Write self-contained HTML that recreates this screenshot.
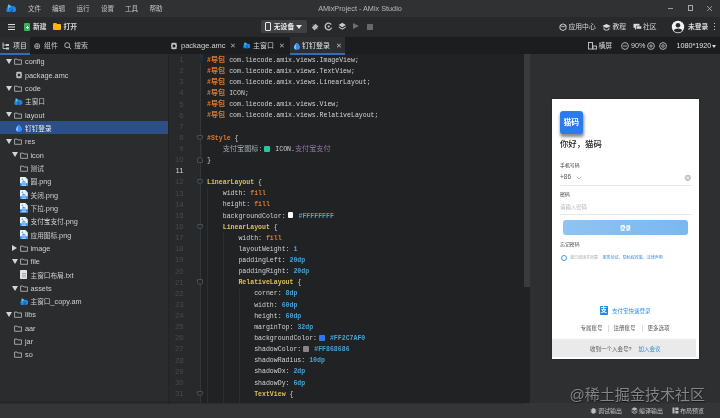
<!DOCTYPE html>
<html lang="zh"><head><meta charset="utf-8"><title>AMixProject - AMix Studio</title>
<style>
*{margin:0;padding:0;box-sizing:border-box}
html,body{width:720px;height:418px;overflow:hidden;background:#212223}
body{position:relative;font-family:"Liberation Sans","Noto Sans CJK SC",sans-serif;color:#c8c8c8;font-size:7px;line-height:1}
#wrap{position:absolute;left:0;top:0;width:720px;height:418px;filter:blur(0.4px)}
.a{position:absolute;white-space:nowrap}
.t{position:absolute;white-space:nowrap;line-height:10px;height:10px}
#title{left:-6px;top:-6px;width:732px;height:22.5px;background:#303132}
#tool{left:-6px;top:16.5px;width:732px;height:20.5px;background:#28292a}
#tabs{left:-6px;top:37px;width:732px;height:17px;background:#1c1d1e}
#side{left:-6px;top:53.6px;width:174px;height:350px;background:#2b2c2d}
#edit{left:168px;top:53.6px;width:362.3px;height:350px;background:linear-gradient(90deg,#28292a 32.5px,#212223 32.5px)}
#split{left:524px;top:53.6px;width:6.1px;height:233.4px;background:#393b3c}
#prev{left:530.3px;top:53.6px;width:196px;height:350px;background:#2d2f30}
#status{left:-6px;top:403.3px;width:732px;height:20.7px;background:#333536}
.menu{font-size:6.6px;color:#c4c4c4;top:4.3px}
.tb{font-size:6.8px;color:#d8d8d8;font-weight:bold;top:22px}
.row{position:absolute;left:0;width:168px;height:13.3px}
.row .t{top:2.5px;font-size:7.1px;color:#d0d0d0}
.ln{position:absolute;left:163.5px;width:20px;margin-top:-0.7px;text-align:right;font-family:"Liberation Sans",sans-serif;font-size:7.7px;color:#5a5c5e;line-height:11.13px;height:11.13px}
.cl{position:absolute;left:207px;font-family:"Liberation Mono","Noto Sans CJK SC",monospace;font-size:6.56px;font-weight:normal;color:#d0d4d8;line-height:11.13px;height:11.13px;white-space:pre}
.k{color:#dd7a30;font-weight:bold}.c{color:#d8c452;font-weight:bold}.n{color:#45a4d8;font-weight:bold}.p{color:#bcc2c8}.g{color:#a4abb2}
.sw{display:inline-block;width:5.7px;height:5.9px;vertical-align:-0.8px;margin:0 1.2px 0 2.1px;border-radius:1px}
.z{font-size:7.15px;font-weight:normal}
.zb{font-size:7.15px}
.zh{font-size:6.65px}
.row .t{font-size:7.3px}
.guide{position:absolute;width:1px;background:#2c2e30}
</style></head>
<body>
<div id="wrap">
<div class="a" id="title"></div><div class="a" id="tool"></div><div class="a" id="tabs"></div>
<div class="a" id="side"></div><div class="a" id="edit"></div><div class="a" id="split"></div><div class="a" id="prev"></div><div class="a" id="status"></div>
<div class="a" style="left:168px;top:53.6px;width:1px;height:350px;background:#222324"></div>
<div class="a" style="left:0;top:400.6px;width:524px;height:3px;background:rgba(30,36,38,.45)"></div>
<svg class="a" style="left:5.6px;top:3.6px" width="10.6" height="8.6" viewBox="0 0 11 9"><path d="M2.4 0.3L5.6 2.4C8.2 1.6 10.8 3.3 10.6 6.1C10.5 8 8.8 8.8 6.8 8.8H2.2C0.6 8.8 0.1 7.2 0.5 5.6C0.9 4 1.8 2.4 2.4 0.3Z" fill="#1c86e2"/><path d="M2.4 0.3L5.6 2.4C4 3 3 4.4 2.8 6.4C2 5 1.9 2.6 2.4 0.3Z" fill="#52c4f6"/><path d="M4.6 8.8C4.4 6.4 5.6 4.8 7.4 4.6C6.6 5.6 6.4 7.2 6.8 8.8Z" fill="#0f5fb4"/><circle cx="3.9" cy="4.6" r="0.55" fill="#0b3f80"/></svg>
<div class="t menu" style="left:28px">文件</div>
<div class="t menu" style="left:52px">编辑</div>
<div class="t menu" style="left:76.5px">运行</div>
<div class="t menu" style="left:101px">设置</div>
<div class="t menu" style="left:125px">工具</div>
<div class="t menu" style="left:149.5px">帮助</div>
<div class="t" style="left:0;width:720px;text-align:center;top:4px;font-size:7.27px;color:#b8b8b8">AMixProject - AMix Studio</div>
<div class="a" style="left:667.5px;top:8px;width:5px;height:1px;background:#9a9a9a"></div>
<div class="a" style="left:687.5px;top:5.3px;width:5.4px;height:5.4px;border:0.9px solid #a8a8a8"></div>
<svg class="a" style="left:706.8px;top:5.5px" width="5.2" height="5.2" viewBox="0 0 6 6"><path d="M0 0L6 6M6 0L0 6" stroke="#b0b0b0" stroke-width="1"/></svg>
<div class="a" style="left:8px;top:24px;width:7px;height:1px;background:#ddd;box-shadow:0 2.5px 0 #ddd,0 5px 0 #ddd"></div>
<div class="a" style="left:24px;top:23px;width:6px;height:8px;background:#35b45a;border-radius:1px"></div>
<div class="a" style="left:26px;top:26.5px;width:3px;height:1px;background:#fff"></div><div class="a" style="left:27px;top:25.5px;width:1px;height:3px;background:#fff"></div>
<div class="t tb" style="left:33px">新建</div>
<div class="a" style="left:53.3px;top:24.3px;width:8.2px;height:6px;background:#f7b51c;border-radius:1px"></div><div class="a" style="left:53.3px;top:23.4px;width:4px;height:2px;background:#f7b51c;border-radius:1px"></div>
<div class="t tb" style="left:63.5px">打开</div>
<div class="a" style="left:261.3px;top:20.2px;width:45.5px;height:12.8px;background:#3e4143;border-radius:2px"></div>
<div class="a" style="left:264.8px;top:21.8px;width:6.2px;height:9.2px;border:1px solid #e8e8e8;border-radius:1px;border-top-width:1.5px;border-bottom-width:1.5px"></div>
<div class="t tb" style="left:273.8px;top:21.5px;color:#eee">无设备</div>
<div class="a" style="left:296px;top:24.8px;border:3.5px solid transparent;border-top:4.7px solid #e8e8e8;border-bottom:0"></div>
<svg class="a" style="left:310.5px;top:22.5px" width="8" height="8" viewBox="0 0 8 8"><path d="M4.6 0.8L7.4 3.6L3.6 7.4L0.8 4.6Z" fill="#b8b8b8"/><path d="M2 1.6L3 2.6M5.6 5.2L6.6 6.2" stroke="#b8b8b8" stroke-width="0.9"/></svg>
<svg class="a" style="left:323.7px;top:22px" width="9" height="9" viewBox="0 0 9 9"><path d="M7.2 2.6A3.3 3.3 0 1 0 7.6 5.6" fill="none" stroke="#c4c4c4" stroke-width="1.3"/><circle cx="4.7" cy="4.5" r="1.1" fill="#c4c4c4"/></svg>
<svg class="a" style="left:338px;top:22.3px" width="8.5" height="8.5" viewBox="0 0 9 9"><path d="M4.5 0.8L8.3 3.2L4.5 5.6L0.7 3.2Z" fill="#cacaca"/><path d="M0.8 5.2L4.5 7.6L8.2 5.2" fill="none" stroke="#cacaca" stroke-width="1.1"/></svg>
<div class="a" style="left:352.7px;top:22.8px;border:3.7px solid transparent;border-left:6.6px solid #6c6e70;border-right:0"></div>
<div class="a" style="left:367px;top:23.8px;width:6px;height:5.8px;background:#66686a;border-radius:0.5px"></div>
<svg class="a" style="left:559px;top:22.5px" width="8" height="8" viewBox="0 0 8 8"><path d="M1 2.4L4 0.9L7 2.4V6L4 7.5L1 6Z" fill="none" stroke="#ddd" stroke-width="0.9" stroke-linejoin="round"/><path d="M1 2.4L4 3.9L7 2.4" fill="none" stroke="#ddd" stroke-width="0.8"/></svg>
<div class="t tb" style="left:568.5px;font-weight:normal">应用中心</div>
<svg class="a" style="left:602px;top:22.5px" width="9" height="8" viewBox="0 0 9 8"><path d="M0.3 3L4.5 1L8.7 3L4.5 5Z" fill="#ddd"/><path d="M2 4.5V6.3C3 7.4 6 7.4 7 6.3V4.5" fill="none" stroke="#ddd" stroke-width="0.9"/></svg>
<div class="t tb" style="left:612.5px;font-weight:normal">教程</div>
<svg class="a" style="left:633px;top:22.5px" width="9" height="8" viewBox="0 0 9 8"><rect x="0.5" y="0.8" width="6" height="4" fill="#ddd"/><path d="M2 4.5L2 7L4.5 4.8Z" fill="#ddd"/><rect x="3.5" y="3" width="5" height="3" fill="#ddd" stroke="#27292a" stroke-width="0.5"/></svg>
<div class="t tb" style="left:643px;font-weight:normal">社区</div>
<svg class="a" style="left:671px;top:19.6px" width="14" height="14" viewBox="0 0 14 14"><circle cx="7" cy="7" r="6.2" fill="#f2f2f2"/><circle cx="7" cy="5.3" r="2.3" fill="#27292a"/><path d="M2.8 10.8C3.5 7.6 10.5 7.6 11.2 10.8C9 13 5 13 2.8 10.8Z" fill="#27292a"/></svg>
<div class="t tb" style="left:688px">未登录</div>
<div class="a" style="left:713.5px;top:23px;width:1.4px;height:1.4px;background:#ccc;box-shadow:0 3px 0 #ccc,0 6px 0 #ccc"></div>
<div class="a" style="left:-6px;top:37px;width:36px;height:17.6px;background:#2b2d2e;border-bottom:2.4px solid #356cb2"></div>
<svg class="a" style="left:2px;top:41.5px" width="8" height="8" viewBox="0 0 8 8"><path d="M1 0.5V6.5H4M1 3H4" fill="none" stroke="#ccc" stroke-width="0.9"/><rect x="4" y="2" width="3" height="2" fill="#ccc"/><rect x="4" y="5.5" width="3" height="2" fill="#ccc"/></svg>
<div class="t" style="left:13px;top:41px;font-size:6.9px;color:#ddd">项目</div>
<svg class="a" style="left:33.5px;top:42.5px" width="6.4" height="6.4" viewBox="0 0 7 7"><circle cx="3.5" cy="3.5" r="2.8" fill="none" stroke="#bbb" stroke-width="0.9"/><path d="M3.5 1V6M1 3.5H6" stroke="#bbb" stroke-width="0.8"/></svg>
<div class="t" style="left:44px;top:41px;font-size:6.9px;color:#c4c4c4">组件</div>
<svg class="a" style="left:63.5px;top:42px" width="8" height="8" viewBox="0 0 8 8"><circle cx="3.2" cy="3.2" r="2.5" fill="none" stroke="#bbb" stroke-width="0.9"/><path d="M5 5L7.2 7.2" stroke="#bbb" stroke-width="0.9"/></svg>
<div class="t" style="left:74px;top:41px;font-size:6.9px;color:#c4c4c4">搜索</div>
<div class="a" style="left:289.7px;top:37px;width:55.6px;height:17.6px;background:#2c2e2f;border-bottom:2.4px solid #356cb2"></div>
<svg class="a" style="left:170.3px;top:41.5px" width="8" height="8" viewBox="0 0 8 8"><path d="M4 0.6L5 1L5.9 0.7L6.8 1.6L6.5 2.5L7 3.4V4.6L6.5 5.5L6.8 6.4L5.9 7.3L5 7L4 7.4L3 7L2.1 7.3L1.2 6.4L1.5 5.5L1 4.6V3.4L1.5 2.5L1.2 1.6L2.1 0.7L3 1Z" fill="#c0c0c0"/><circle cx="4" cy="4" r="1.5" fill="#1b1c1d"/></svg>
<div class="t" style="left:181px;top:40.5px;font-size:7.5px;color:#d0d0d0">package.amc</div>
<div class="t" style="left:230px;top:40.5px;font-size:7px;color:#aaa">✕</div>
<svg class="a" style="left:242.6px;top:42px" width="7.8" height="6.6" viewBox="0 0 11 9"><path d="M2.4 0.3L5.6 2.4C8.2 1.6 10.8 3.3 10.6 6.1C10.5 8 8.8 8.8 6.8 8.8H2.2C0.6 8.8 0.1 7.2 0.5 5.6C0.9 4 1.8 2.4 2.4 0.3Z" fill="#1c86e2"/><path d="M2.4 0.3L5.6 2.4C4 3 3 4.4 2.8 6.4C2 5 1.9 2.6 2.4 0.3Z" fill="#52c4f6"/><path d="M4.6 8.8C4.4 6.4 5.6 4.8 7.4 4.6C6.6 5.6 6.4 7.2 6.8 8.8Z" fill="#0f5fb4"/><circle cx="3.9" cy="4.6" r="0.55" fill="#0b3f80"/></svg>
<div class="t" style="left:253px;top:40.5px;font-size:7px;color:#d0d0d0">主窗口</div>
<div class="t" style="left:279px;top:40.5px;font-size:7px;color:#aaa">✕</div>
<svg class="a" style="left:292.5px;top:41.5px" width="8" height="8" viewBox="0 0 8 8"><path d="M4 0.5C6 2.5 7 3.8 7 5.2C7 6.8 5.7 7.8 4 7.8C2.3 7.8 1 6.8 1 5.2C1 3.8 2 2.5 4 0.5Z" fill="#3590f2"/><path d="M3.6 1C2.2 2.6 1.3 3.9 1.3 5.2C1.3 6.3 1.9 7.1 2.8 7.4C2.2 5.4 2.6 3 3.6 1Z" fill="#b4d9ff"/></svg>
<div class="t" style="left:302px;top:40.5px;font-size:7px;color:#e6e6e6">钉钉登录</div>
<div class="t" style="left:335.5px;top:40.5px;font-size:7px;color:#bbb">✕</div>
<svg class="a" style="left:588px;top:42px" width="9" height="8" viewBox="0 0 9 8"><rect x="0.5" y="0.5" width="4" height="6.5" fill="none" stroke="#ccc" stroke-width="0.9"/><rect x="5" y="4" width="3.5" height="3" fill="none" stroke="#ccc" stroke-width="0.9"/></svg>
<div class="t" style="left:598.5px;top:40.5px;font-size:6.8px;color:#d0d0d0">横屏</div>
<svg class="a" style="left:621px;top:42px" width="8" height="8" viewBox="0 0 8 8"><circle cx="4" cy="4" r="3.4" fill="none" stroke="#d4d4d4" stroke-width="0.8"/><path d="M2.1 4H5.9" stroke="#d4d4d4" stroke-width="0.8"/></svg>
<div class="t" style="left:631px;top:40.5px;font-size:7.2px;color:#d8d8d8">90%</div>
<svg class="a" style="left:646.8px;top:42px" width="8" height="8" viewBox="0 0 8 8"><circle cx="4" cy="4" r="3.4" fill="none" stroke="#d4d4d4" stroke-width="0.8"/><path d="M2.1 4H5.9M4 2.1V5.9" stroke="#d4d4d4" stroke-width="0.7"/></svg>
<svg class="a" style="left:659.2px;top:42px" width="8" height="8" viewBox="0 0 8 8"><circle cx="4" cy="4" r="3.4" fill="none" stroke="#d4d4d4" stroke-width="0.8"/><circle cx="4" cy="4" r="1.3" fill="none" stroke="#d4d4d4" stroke-width="0.7"/></svg>
<div class="t" style="left:676.5px;top:40.5px;font-size:7.2px;color:#e0e0e0">1080*1920</div>
<div class="a" style="left:711.5px;top:44.5px;border:2.5px solid transparent;border-top:3.5px solid #ddd;border-bottom:0"></div>
<div class="row" style="top:54.90px;"><div class="a" style="left:5.5px;top:4.3px;border:3px solid transparent;border-top:5.2px solid #d4d4d4;border-bottom:0"></div><svg class="a" style="left:14px;top:3.4px" width="8.2" height="7.2" viewBox="0 0 9 8"><path d="M0.6 1.2H3.4L4.3 2.2H8.4V7H0.6Z" fill="none" stroke="#bdbdbd" stroke-width="0.9" stroke-linejoin="round"/></svg><div class="t" style="left:25px;color:#d0d0d0">config</div></div>
<div class="row" style="top:68.22px;"><svg class="a" style="left:15px;top:2.8px" width="8" height="8" viewBox="0 0 8 8"><path d="M4 0.6L5 1L5.9 0.7L6.8 1.6L6.5 2.5L7 3.4V4.6L6.5 5.5L6.8 6.4L5.9 7.3L5 7L4 7.4L3 7L2.1 7.3L1.2 6.4L1.5 5.5L1 4.6V3.4L1.5 2.5L1.2 1.6L2.1 0.7L3 1Z" fill="#c0c0c0"/><circle cx="4" cy="4" r="1.5" fill="#2b2d2e"/></svg><div class="t" style="left:25px;color:#d0d0d0">package.amc</div></div>
<div class="row" style="top:81.54px;"><div class="a" style="left:5.5px;top:4.3px;border:3px solid transparent;border-top:5.2px solid #d4d4d4;border-bottom:0"></div><svg class="a" style="left:14px;top:3.4px" width="8.2" height="7.2" viewBox="0 0 9 8"><path d="M0.6 1.2H3.4L4.3 2.2H8.4V7H0.6Z" fill="none" stroke="#bdbdbd" stroke-width="0.9" stroke-linejoin="round"/></svg><div class="t" style="left:25px;color:#d0d0d0">code</div></div>
<div class="row" style="top:94.86px;"><svg class="a" style="left:14px;top:2.9px" width="8.8" height="7.2" viewBox="0 0 11 9"><path d="M2.4 0.3L5.6 2.4C8.2 1.6 10.8 3.3 10.6 6.1C10.5 8 8.8 8.8 6.8 8.8H2.2C0.6 8.8 0.1 7.2 0.5 5.6C0.9 4 1.8 2.4 2.4 0.3Z" fill="#1c86e2"/><path d="M2.4 0.3L5.6 2.4C4 3 3 4.4 2.8 6.4C2 5 1.9 2.6 2.4 0.3Z" fill="#52c4f6"/><path d="M4.6 8.8C4.4 6.4 5.6 4.8 7.4 4.6C6.6 5.6 6.4 7.2 6.8 8.8Z" fill="#0f5fb4"/><circle cx="3.9" cy="4.6" r="0.55" fill="#0b3f80"/></svg><div class="t" style="left:25px;color:#d0d0d0"><span class="zh">主窗口</span></div></div>
<div class="row" style="top:108.18px;"><div class="a" style="left:5.5px;top:4.3px;border:3px solid transparent;border-top:5.2px solid #d4d4d4;border-bottom:0"></div><svg class="a" style="left:14px;top:3.4px" width="8.2" height="7.2" viewBox="0 0 9 8"><path d="M0.6 1.2H3.4L4.3 2.2H8.4V7H0.6Z" fill="none" stroke="#bdbdbd" stroke-width="0.9" stroke-linejoin="round"/></svg><div class="t" style="left:25px;color:#d0d0d0">layout</div></div>
<div class="a" style="left:-6px;top:121.30px;width:174px;height:12.9px;background:#2c4f85"></div>
<div class="row" style="top:121.50px;"><svg class="a" style="left:15px;top:2.6px" width="8" height="8" viewBox="0 0 8 8"><path d="M4 0.5C6 2.5 7 3.8 7 5.2C7 6.8 5.7 7.8 4 7.8C2.3 7.8 1 6.8 1 5.2C1 3.8 2 2.5 4 0.5Z" fill="#3590f2"/><path d="M3.6 1C2.2 2.6 1.3 3.9 1.3 5.2C1.3 6.3 1.9 7.1 2.8 7.4C2.2 5.4 2.6 3 3.6 1Z" fill="#b4d9ff"/></svg><div class="t" style="left:25px;color:#f0f0f0"><span class="zh">钉钉登录</span></div></div>
<div class="row" style="top:134.82px;"><div class="a" style="left:5.5px;top:4.3px;border:3px solid transparent;border-top:5.2px solid #d4d4d4;border-bottom:0"></div><svg class="a" style="left:14px;top:3.4px" width="8.2" height="7.2" viewBox="0 0 9 8"><path d="M0.6 1.2H3.4L4.3 2.2H8.4V7H0.6Z" fill="none" stroke="#bdbdbd" stroke-width="0.9" stroke-linejoin="round"/></svg><div class="t" style="left:25px;color:#d0d0d0">res</div></div>
<div class="row" style="top:148.14px;"><div class="a" style="left:11.5px;top:4.3px;border:3px solid transparent;border-top:5.2px solid #d4d4d4;border-bottom:0"></div><svg class="a" style="left:20px;top:3.4px" width="8.2" height="7.2" viewBox="0 0 9 8"><path d="M0.6 1.2H3.4L4.3 2.2H8.4V7H0.6Z" fill="none" stroke="#bdbdbd" stroke-width="0.9" stroke-linejoin="round"/></svg><div class="t" style="left:30.5px;color:#d0d0d0">icon</div></div>
<div class="row" style="top:161.46px;"><svg class="a" style="left:20px;top:3.4px" width="8.2" height="7.2" viewBox="0 0 9 8"><path d="M0.6 1.2H3.4L4.3 2.2H8.4V7H0.6Z" fill="none" stroke="#bdbdbd" stroke-width="0.9" stroke-linejoin="round"/></svg><div class="t" style="left:30.5px;color:#d0d0d0"><span class="zh">测试</span></div></div>
<div class="row" style="top:174.78px;"><svg class="a" style="left:19.9px;top:1.8px" width="7.8" height="9.6" viewBox="0 0 7.8 9.6"><path d="M0.6 0H5.4L7.8 2.4V9A0.6 0.6 0 0 1 7.2 9.6H0.6A0.6 0.6 0 0 1 0 9V0.6A0.6 0.6 0 0 1 0.6 0Z" fill="#eef5fd"/><path d="M0 6.2H7.8V9A0.6 0.6 0 0 1 7.2 9.6H0.6A0.6 0.6 0 0 1 0 9Z" fill="#2b86e6"/><path d="M5.4 0L7.8 2.4H5.4Z" fill="#b9d6f5"/><path d="M1.8 5.6L3.2 3.2L4.2 4.6L4.9 3.9L6 5.6Z" fill="#3b93ee"/><circle cx="2.4" cy="2.2" r="0.8" fill="#3b93ee"/><path d="M1.6 7.2H6.2M1.6 8.5H6.2" stroke="#cfe4fa" stroke-width="0.7"/></svg><div class="t" style="left:30.5px;color:#d0d0d0"><span class="zh">圆</span>.png</div></div>
<div class="row" style="top:188.10px;"><svg class="a" style="left:19.9px;top:1.8px" width="7.8" height="9.6" viewBox="0 0 7.8 9.6"><path d="M0.6 0H5.4L7.8 2.4V9A0.6 0.6 0 0 1 7.2 9.6H0.6A0.6 0.6 0 0 1 0 9V0.6A0.6 0.6 0 0 1 0.6 0Z" fill="#eef5fd"/><path d="M0 6.2H7.8V9A0.6 0.6 0 0 1 7.2 9.6H0.6A0.6 0.6 0 0 1 0 9Z" fill="#2b86e6"/><path d="M5.4 0L7.8 2.4H5.4Z" fill="#b9d6f5"/><path d="M1.8 5.6L3.2 3.2L4.2 4.6L4.9 3.9L6 5.6Z" fill="#3b93ee"/><circle cx="2.4" cy="2.2" r="0.8" fill="#3b93ee"/><path d="M1.6 7.2H6.2M1.6 8.5H6.2" stroke="#cfe4fa" stroke-width="0.7"/></svg><div class="t" style="left:30.5px;color:#d0d0d0"><span class="zh">关闭</span>.png</div></div>
<div class="row" style="top:201.42px;"><svg class="a" style="left:19.9px;top:1.8px" width="7.8" height="9.6" viewBox="0 0 7.8 9.6"><path d="M0.6 0H5.4L7.8 2.4V9A0.6 0.6 0 0 1 7.2 9.6H0.6A0.6 0.6 0 0 1 0 9V0.6A0.6 0.6 0 0 1 0.6 0Z" fill="#eef5fd"/><path d="M0 6.2H7.8V9A0.6 0.6 0 0 1 7.2 9.6H0.6A0.6 0.6 0 0 1 0 9Z" fill="#2b86e6"/><path d="M5.4 0L7.8 2.4H5.4Z" fill="#b9d6f5"/><path d="M1.8 5.6L3.2 3.2L4.2 4.6L4.9 3.9L6 5.6Z" fill="#3b93ee"/><circle cx="2.4" cy="2.2" r="0.8" fill="#3b93ee"/><path d="M1.6 7.2H6.2M1.6 8.5H6.2" stroke="#cfe4fa" stroke-width="0.7"/></svg><div class="t" style="left:30.5px;color:#d0d0d0"><span class="zh">下拉</span>.png</div></div>
<div class="row" style="top:214.74px;"><svg class="a" style="left:19.9px;top:1.8px" width="7.8" height="9.6" viewBox="0 0 7.8 9.6"><path d="M0.6 0H5.4L7.8 2.4V9A0.6 0.6 0 0 1 7.2 9.6H0.6A0.6 0.6 0 0 1 0 9V0.6A0.6 0.6 0 0 1 0.6 0Z" fill="#eef5fd"/><path d="M0 6.2H7.8V9A0.6 0.6 0 0 1 7.2 9.6H0.6A0.6 0.6 0 0 1 0 9Z" fill="#2b86e6"/><path d="M5.4 0L7.8 2.4H5.4Z" fill="#b9d6f5"/><path d="M1.8 5.6L3.2 3.2L4.2 4.6L4.9 3.9L6 5.6Z" fill="#3b93ee"/><circle cx="2.4" cy="2.2" r="0.8" fill="#3b93ee"/><path d="M1.6 7.2H6.2M1.6 8.5H6.2" stroke="#cfe4fa" stroke-width="0.7"/></svg><div class="t" style="left:30.5px;color:#d0d0d0"><span class="zh">支付宝支付</span>.png</div></div>
<div class="row" style="top:228.06px;"><svg class="a" style="left:19.9px;top:1.8px" width="7.8" height="9.6" viewBox="0 0 7.8 9.6"><path d="M0.6 0H5.4L7.8 2.4V9A0.6 0.6 0 0 1 7.2 9.6H0.6A0.6 0.6 0 0 1 0 9V0.6A0.6 0.6 0 0 1 0.6 0Z" fill="#eef5fd"/><path d="M0 6.2H7.8V9A0.6 0.6 0 0 1 7.2 9.6H0.6A0.6 0.6 0 0 1 0 9Z" fill="#2b86e6"/><path d="M5.4 0L7.8 2.4H5.4Z" fill="#b9d6f5"/><path d="M1.8 5.6L3.2 3.2L4.2 4.6L4.9 3.9L6 5.6Z" fill="#3b93ee"/><circle cx="2.4" cy="2.2" r="0.8" fill="#3b93ee"/><path d="M1.6 7.2H6.2M1.6 8.5H6.2" stroke="#cfe4fa" stroke-width="0.7"/></svg><div class="t" style="left:30.5px;color:#d0d0d0"><span class="zh">应用图标</span>.png</div></div>
<div class="row" style="top:241.38px;"><div class="a" style="left:12.0px;top:3.7px;border:3px solid transparent;border-left:5.2px solid #d4d4d4;border-right:0"></div><svg class="a" style="left:20px;top:3.4px" width="8.2" height="7.2" viewBox="0 0 9 8"><path d="M0.6 1.2H3.4L4.3 2.2H8.4V7H0.6Z" fill="none" stroke="#bdbdbd" stroke-width="0.9" stroke-linejoin="round"/></svg><div class="t" style="left:30.5px;color:#d0d0d0">image</div></div>
<div class="row" style="top:254.70px;"><div class="a" style="left:11.5px;top:4.3px;border:3px solid transparent;border-top:5.2px solid #d4d4d4;border-bottom:0"></div><svg class="a" style="left:20px;top:3.4px" width="8.2" height="7.2" viewBox="0 0 9 8"><path d="M0.6 1.2H3.4L4.3 2.2H8.4V7H0.6Z" fill="none" stroke="#bdbdbd" stroke-width="0.9" stroke-linejoin="round"/></svg><div class="t" style="left:30.5px;color:#d0d0d0">file</div></div>
<div class="row" style="top:268.02px;"><div class="a" style="left:20px;top:2.2px;width:7px;height:9px;background:#e4e4e4;border-radius:0.8px"></div><div class="a" style="left:21.5px;top:5px;width:4px;height:0.8px;background:#aaa;box-shadow:0 1.7px 0 #aaa,0 3.4px 0 #aaa"></div><div class="t" style="left:30.5px;color:#d0d0d0"><span class="zh">主窗口布局</span>.txt</div></div>
<div class="row" style="top:281.34px;"><div class="a" style="left:11.5px;top:4.3px;border:3px solid transparent;border-top:5.2px solid #d4d4d4;border-bottom:0"></div><svg class="a" style="left:20px;top:3.4px" width="8.2" height="7.2" viewBox="0 0 9 8"><path d="M0.6 1.2H3.4L4.3 2.2H8.4V7H0.6Z" fill="none" stroke="#bdbdbd" stroke-width="0.9" stroke-linejoin="round"/></svg><div class="t" style="left:30.5px;color:#d0d0d0">assets</div></div>
<div class="row" style="top:294.66px;"><svg class="a" style="left:19.5px;top:2.9px" width="8.8" height="7.2" viewBox="0 0 11 9"><path d="M2.4 0.3L5.6 2.4C8.2 1.6 10.8 3.3 10.6 6.1C10.5 8 8.8 8.8 6.8 8.8H2.2C0.6 8.8 0.1 7.2 0.5 5.6C0.9 4 1.8 2.4 2.4 0.3Z" fill="#1c86e2"/><path d="M2.4 0.3L5.6 2.4C4 3 3 4.4 2.8 6.4C2 5 1.9 2.6 2.4 0.3Z" fill="#52c4f6"/><path d="M4.6 8.8C4.4 6.4 5.6 4.8 7.4 4.6C6.6 5.6 6.4 7.2 6.8 8.8Z" fill="#0f5fb4"/><circle cx="3.9" cy="4.6" r="0.55" fill="#0b3f80"/></svg><div class="t" style="left:30.5px;color:#d0d0d0"><span class="zh">主窗口</span>_copy.am</div></div>
<div class="row" style="top:307.98px;"><div class="a" style="left:5.5px;top:4.3px;border:3px solid transparent;border-top:5.2px solid #d4d4d4;border-bottom:0"></div><svg class="a" style="left:14px;top:3.4px" width="8.2" height="7.2" viewBox="0 0 9 8"><path d="M0.6 1.2H3.4L4.3 2.2H8.4V7H0.6Z" fill="none" stroke="#bdbdbd" stroke-width="0.9" stroke-linejoin="round"/></svg><div class="t" style="left:25px;color:#d0d0d0">libs</div></div>
<div class="row" style="top:321.30px;"><svg class="a" style="left:14px;top:3.4px" width="8.2" height="7.2" viewBox="0 0 9 8"><path d="M0.6 1.2H3.4L4.3 2.2H8.4V7H0.6Z" fill="none" stroke="#bdbdbd" stroke-width="0.9" stroke-linejoin="round"/></svg><div class="t" style="left:25px;color:#d0d0d0">aar</div></div>
<div class="row" style="top:334.62px;"><svg class="a" style="left:14px;top:3.4px" width="8.2" height="7.2" viewBox="0 0 9 8"><path d="M0.6 1.2H3.4L4.3 2.2H8.4V7H0.6Z" fill="none" stroke="#bdbdbd" stroke-width="0.9" stroke-linejoin="round"/></svg><div class="t" style="left:25px;color:#d0d0d0">jar</div></div>
<div class="row" style="top:347.94px;"><svg class="a" style="left:14px;top:3.4px" width="8.2" height="7.2" viewBox="0 0 9 8"><path d="M0.6 1.2H3.4L4.3 2.2H8.4V7H0.6Z" fill="none" stroke="#bdbdbd" stroke-width="0.9" stroke-linejoin="round"/></svg><div class="t" style="left:25px;color:#d0d0d0">so</div></div>
<div class="ln" style="top:54.75px;color:#48494b">1</div>
<div class="cl" style="top:54.75px"><span class="k">#<span class="zb">导包</span></span> com.liecode.amix.views.ImageView;</div>
<div class="ln" style="top:65.88px;color:#48494b">2</div>
<div class="cl" style="top:65.88px"><span class="k">#<span class="zb">导包</span></span> com.liecode.amix.views.TextView;</div>
<div class="ln" style="top:77.01px;color:#48494b">3</div>
<div class="cl" style="top:77.01px"><span class="k">#<span class="zb">导包</span></span> com.liecode.amix.views.LinearLayout;</div>
<div class="ln" style="top:88.14px;color:#48494b">4</div>
<div class="cl" style="top:88.14px"><span class="k">#<span class="zb">导包</span></span> ICON;</div>
<div class="ln" style="top:99.27px;color:#48494b">5</div>
<div class="cl" style="top:99.27px"><span class="k">#<span class="zb">导包</span></span> com.liecode.amix.views.View;</div>
<div class="ln" style="top:110.40px;color:#48494b">6</div>
<div class="cl" style="top:110.40px"><span class="k">#<span class="zb">导包</span></span> com.liecode.amix.views.RelativeLayout;</div>
<div class="ln" style="top:121.53px;color:#48494b">7</div>
<div class="cl" style="top:121.53px"></div>
<div class="ln" style="top:132.66px;color:#48494b">8</div>
<div class="cl" style="top:132.66px"><span class="k">#Style</span> {</div>
<div class="ln" style="top:143.79px;color:#48494b">9</div>
<div class="cl" style="top:143.79px">    <span class="g z">支付宝图标</span><span class="g">:</span><span class="sw" style="background:#1cc9a0"></span> ICON.<span class="z" style="color:#9876aa">支付宝支付</span></div>
<div class="ln" style="top:154.92px;color:#48494b">10</div>
<div class="cl" style="top:154.92px">}</div>
<div class="ln" style="top:166.05px;color:#d0d0d0">11</div>
<div class="cl" style="top:166.05px"></div>
<div class="ln" style="top:177.18px;color:#48494b">12</div>
<div class="cl" style="top:177.18px"><span class="c">LinearLayout</span> {</div>
<div class="ln" style="top:188.31px;color:#48494b">13</div>
<div class="cl" style="top:188.31px">    width: <span class="k">fill</span></div>
<div class="ln" style="top:199.44px;color:#48494b">14</div>
<div class="cl" style="top:199.44px">    height: <span class="k">fill</span></div>
<div class="ln" style="top:210.57px;color:#48494b">15</div>
<div class="cl" style="top:210.57px">    backgroundColor:<span class="sw" style="background:#ffffff"></span> <span class="n">#FFFFFFFF</span></div>
<div class="ln" style="top:221.70px;color:#48494b">16</div>
<div class="cl" style="top:221.70px">    <span class="c">LinearLayout</span> {</div>
<div class="ln" style="top:232.83px;color:#48494b">17</div>
<div class="cl" style="top:232.83px">        width: <span class="k">fill</span></div>
<div class="ln" style="top:243.96px;color:#48494b">18</div>
<div class="cl" style="top:243.96px">        layoutWeight: <span class="n">1</span></div>
<div class="ln" style="top:255.09px;color:#48494b">19</div>
<div class="cl" style="top:255.09px">        paddingLeft: <span class="n">20dp</span></div>
<div class="ln" style="top:266.22px;color:#48494b">20</div>
<div class="cl" style="top:266.22px">        paddingRight: <span class="n">20dp</span></div>
<div class="ln" style="top:277.35px;color:#48494b">21</div>
<div class="cl" style="top:277.35px">        <span class="c">RelativeLayout</span> {</div>
<div class="ln" style="top:288.48px;color:#48494b">22</div>
<div class="cl" style="top:288.48px">            corner: <span class="n">8dp</span></div>
<div class="ln" style="top:299.61px;color:#48494b">23</div>
<div class="cl" style="top:299.61px">            width: <span class="n">60dp</span></div>
<div class="ln" style="top:310.74px;color:#48494b">24</div>
<div class="cl" style="top:310.74px">            height: <span class="n">60dp</span></div>
<div class="ln" style="top:321.87px;color:#48494b">25</div>
<div class="cl" style="top:321.87px">            marginTop: <span class="n">32dp</span></div>
<div class="ln" style="top:333.00px;color:#48494b">26</div>
<div class="cl" style="top:333.00px">            backgroundColor:<span class="sw" style="background:#2c7af0"></span> <span class="n">#FF2C7AF0</span></div>
<div class="ln" style="top:344.13px;color:#48494b">27</div>
<div class="cl" style="top:344.13px">            shadowColor:<span class="sw" style="background:#868686"></span> <span class="n">#FF868686</span></div>
<div class="ln" style="top:355.26px;color:#48494b">28</div>
<div class="cl" style="top:355.26px">            shadowRadius: <span class="n">10dp</span></div>
<div class="ln" style="top:366.39px;color:#48494b">29</div>
<div class="cl" style="top:366.39px">            shadowDx: <span class="n">2dp</span></div>
<div class="ln" style="top:377.52px;color:#48494b">30</div>
<div class="cl" style="top:377.52px">            shadowDy: <span class="n">6dp</span></div>
<div class="ln" style="top:388.65px;color:#48494b">31</div>
<div class="cl" style="top:388.65px">            <span class="c">TextView</span> {</div>
<div class="cl" style="top:399.78px">                </div>
<div class="a" style="left:200px;top:54px;width:1px;height:349px;background:#343638"></div>
<div class="a" style="left:200.3px;top:55px;width:2.4px;height:8px;background:linear-gradient(#1d3350,#1f2630)"></div>
<div class="guide" style="left:207.2px;top:188.3px;height:214.7px"></div>
<div class="guide" style="left:223px;top:232.8px;height:170.2px"></div>
<div class="guide" style="left:238.7px;top:288.5px;height:114.5px"></div>
<div class="guide" style="left:200.5px;top:143.8px;height:11.1px"></div>
<div class="a" style="left:197.4px;top:134.5px;width:5.6px;height:5.4px;border:0.8px solid #46505a;border-radius:1px 1px 2.8px 2.8px;background:#262728"></div>
<div class="a" style="left:197.4px;top:179.0px;width:5.6px;height:5.4px;border:0.8px solid #46505a;border-radius:1px 1px 2.8px 2.8px;background:#262728"></div>
<div class="a" style="left:197.4px;top:223.5px;width:5.6px;height:5.4px;border:0.8px solid #46505a;border-radius:1px 1px 2.8px 2.8px;background:#262728"></div>
<div class="a" style="left:197.4px;top:279.2px;width:5.6px;height:5.4px;border:0.8px solid #46505a;border-radius:1px 1px 2.8px 2.8px;background:#262728"></div>
<div class="a" style="left:197.4px;top:390.5px;width:5.6px;height:5.4px;border:0.8px solid #46505a;border-radius:1px 1px 2.8px 2.8px;background:#262728"></div>
<div class="a" style="left:197.4px;top:157.4px;width:5.6px;height:5.4px;border:0.8px solid #46505a;border-radius:2.8px 2.8px 1px 1px;background:#262728"></div>
<div class="a" style="left:552px;top:99px;width:147px;height:259.8px;background:#fff;box-shadow:0 0 1px rgba(0,0,0,.5)"></div>
<div class="a" style="left:552px;top:338.8px;width:144.2px;height:18.6px;background:#e9eae9"></div>
<div class="a" style="left:560px;top:111px;width:22.6px;height:22.6px;background:#2c7af0;border-radius:3.2px;box-shadow:0.8px 2.4px 3px rgba(100,100,100,.75)"></div>
<div class="t" style="left:560px;top:118.1px;width:22.6px;text-align:center;font-size:7.8px;font-weight:bold;color:#fff">猫码</div>
<div class="t" style="left:560px;top:139px;font-size:8.4px;font-weight:500;color:#1c1c1c">你好，猫码</div>
<div class="t" style="left:560px;top:160.5px;font-size:4.9px;color:#333">手机号码</div>
<div class="t" style="left:560px;top:172px;font-size:6.6px;color:#555">+86</div>
<svg class="a" style="left:576px;top:175.5px" width="6" height="4" viewBox="0 0 6 4"><path d="M0.7 0.7L3 3L5.3 0.7" fill="none" stroke="#999" stroke-width="0.7"/></svg>
<svg class="a" style="left:684.3px;top:173.7px" width="7.6" height="7.6" viewBox="0 0 7 7"><circle cx="3.5" cy="3.5" r="2.9" fill="#c4c4c4"/><path d="M2.3 2.3L4.7 4.7M4.7 2.3L2.3 4.7" stroke="#fff" stroke-width="0.7"/></svg>
<div class="a" style="left:560px;top:185.3px;width:132px;height:0.7px;background:#e8e8e8"></div>
<div class="t" style="left:560px;top:190px;font-size:4.9px;color:#333">密码</div>
<div class="t" style="left:560px;top:202px;font-size:5.4px;color:#b4b4b4">请输入密码</div>
<div class="a" style="left:560px;top:214.3px;width:132px;height:0.7px;background:#e8e8e8"></div>
<div class="a" style="left:563.4px;top:220.2px;width:124.2px;height:14.8px;background:linear-gradient(90deg,#8ec4f3,#79b8f0);border-radius:3px"></div>
<div class="t" style="left:563.5px;top:223px;width:124px;text-align:center;font-size:5.5px;font-weight:bold;color:#fff">登录</div>
<div class="t" style="left:560px;top:239.5px;font-size:4.95px;color:#444">忘记密码</div>
<div class="a" style="left:561px;top:255px;width:6px;height:6px;border:0.9px solid #3b9ae8;border-radius:50%"></div>
<div class="t" style="left:570px;top:253px;font-size:4.03px;color:#aaa">我已阅读并同意<span style="color:#3b8ee0;margin-left:4.5px">服务协议、隐私权政策、法律声明</span></div>
<div class="a" style="left:599.5px;top:306px;width:8.5px;height:8.5px;background:#1c8be0;border-radius:0.8px"></div>
<div class="t" style="left:599.5px;top:305.3px;width:8.5px;text-align:center;font-size:6.5px;color:#fff;font-weight:bold">支</div>
<div class="t" style="left:612px;top:305.5px;font-size:5.53px;color:#2a8be0">支付宝快速登录</div>
<div class="t" style="left:580.5px;top:323px;font-size:5.5px;color:#555">专属账号</div>
<div class="t" style="left:613.5px;top:323px;font-size:5.5px;color:#555">注册账号</div>
<div class="t" style="left:647.5px;top:323px;font-size:5.5px;color:#555">更多选项</div>
<div class="a" style="left:607.5px;top:325px;width:0.6px;height:7px;background:#ddd"></div><div class="a" style="left:641.5px;top:325px;width:0.6px;height:7px;background:#ddd"></div>
<div class="t" style="left:590px;top:344px;font-size:5.5px;color:#555">收到一个入会号?<span style="color:#2a8be0;margin-left:7px">加入会议</span></div>
<div class="t" style="left:569.5px;top:384.5px;font-size:15.05px;line-height:20px;height:20px;color:rgba(190,190,190,.62);text-shadow:0.5px 0.5px 1px rgba(0,0,0,.5)">@稀土掘金技术社区</div>
<svg class="a" style="left:590px;top:407px" width="7" height="7" viewBox="0 0 7 7"><ellipse cx="3.5" cy="4" rx="2.2" ry="2.7" fill="#bbb"/><path d="M0.5 2.5L2 3.5M6.5 2.5L5 3.5M0.3 5H1.5M6.7 5H5.5M2.3 1L3 1.8M4.7 1L4 1.8" stroke="#bbb" stroke-width="0.6"/></svg>
<div class="t" style="left:598px;top:405.5px;font-size:6px;color:#c4c4c4">调试输出</div>
<svg class="a" style="left:631px;top:407px" width="7" height="7" viewBox="0 0 7 7"><path d="M3.5 0.3L6.7 2L3.5 3.7L0.3 2Z" fill="#bbb"/><path d="M0.5 3.6L3.5 5.2L6.5 3.6M0.5 5L3.5 6.6L6.5 5" fill="none" stroke="#bbb" stroke-width="0.7"/></svg>
<div class="t" style="left:639px;top:405.5px;font-size:6px;color:#c4c4c4">编译输出</div>
<svg class="a" style="left:672px;top:407px" width="7" height="7" viewBox="0 0 7 7"><rect x="0.5" y="0.5" width="2" height="6" fill="#bbb"/><rect x="3.3" y="0.5" width="3.2" height="2.6" fill="#bbb"/><rect x="3.3" y="3.9" width="3.2" height="2.6" fill="#bbb"/></svg>
<div class="t" style="left:680px;top:405.5px;font-size:6px;color:#c4c4c4">布局预览</div>
</div>
</body></html>
